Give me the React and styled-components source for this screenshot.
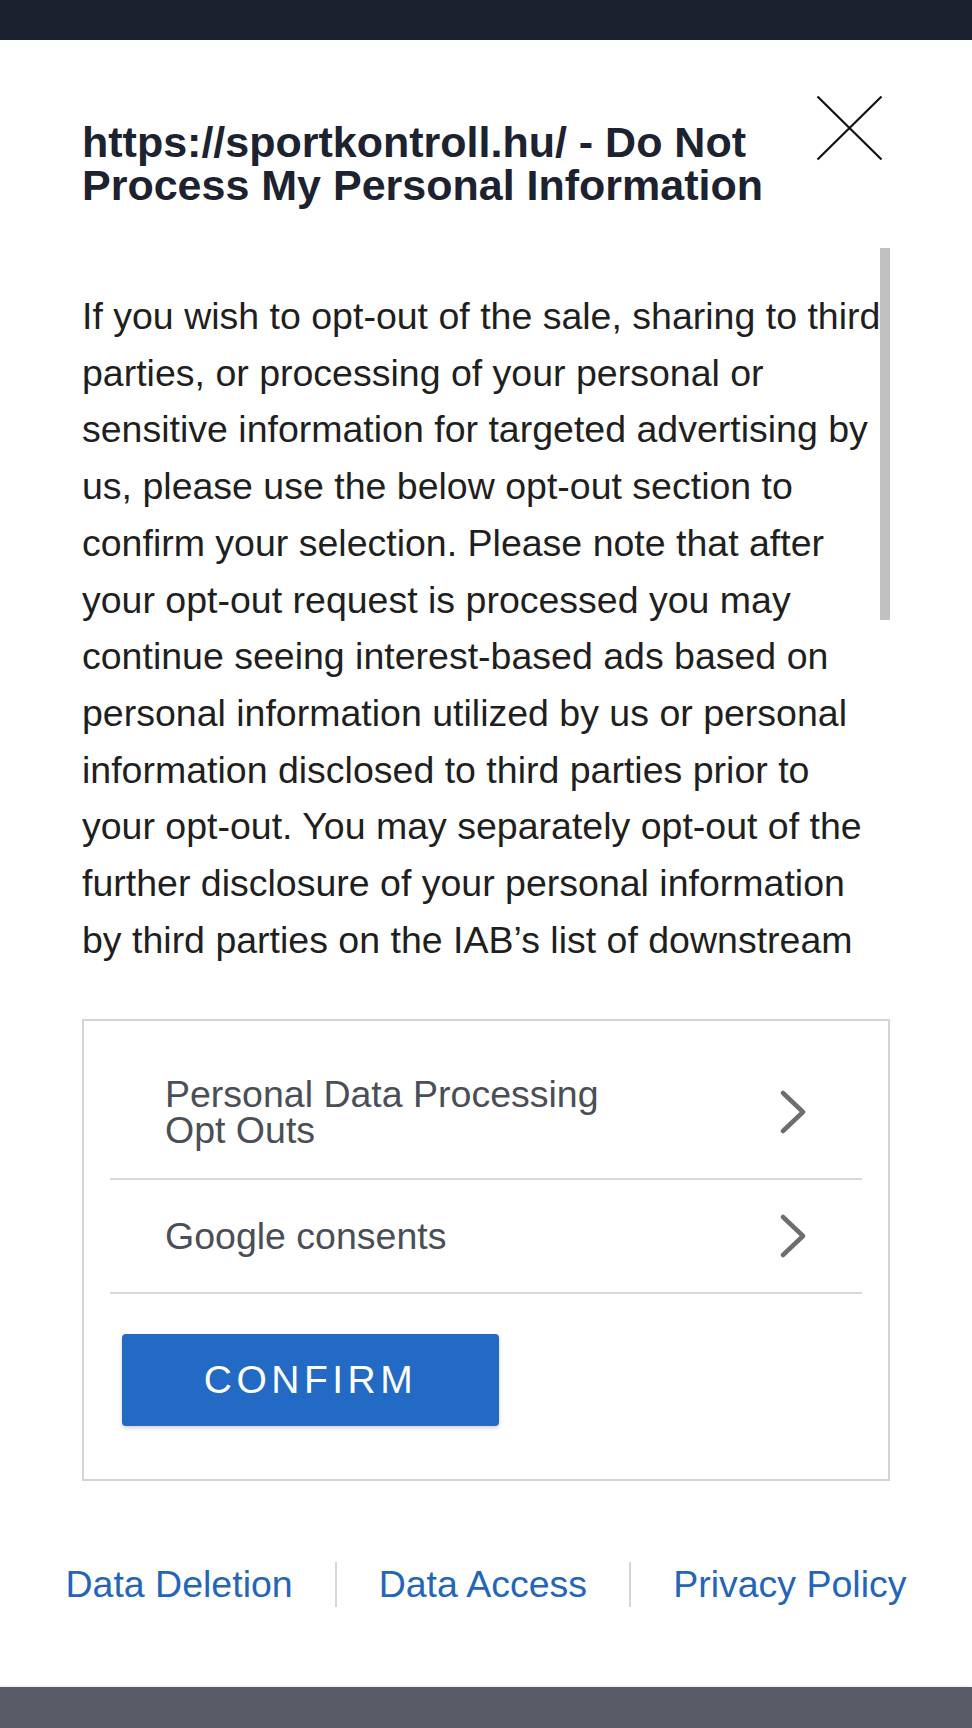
import React from 'react';
import styled, { createGlobalStyle } from 'styled-components';

const COLORS = {
  topBar: '#1c2130',
  bottomBar: '#585c67',
  title: '#1d2230',
  body: '#1f1f1f',
  rowText: '#4a4e56',
  divider: '#d9d9d9',
  chevron: '#6e6e6e',
  primary: '#236ac4',
  link: '#2565b7',
};

const GlobalStyle = createGlobalStyle`
  html, body {
    margin: 0;
    padding: 0;
    background: #fff;
  }
  body {
    font-family: "Liberation Sans", Arial, sans-serif;
  }
`;

const BODY_TEXT =
  'If you wish to opt-out of the sale, sharing to third parties, or processing of your personal or sensitive information for targeted advertising by us, please use the below opt-out section to confirm your selection. Please note that after your opt-out request is processed you may continue seeing interest-based ads based on personal information utilized by us or personal information disclosed to third parties prior to your opt-out. You may separately opt-out of the further disclosure of your personal information by third parties on the IAB\u2019s list of downstream participants. This information may also be disclosed by us to third parties on the IAB\u2019s List of Downstream Participants that may further disclose it to other third parties.';

const options = [
  { id: 'opt-outs', label: 'Personal Data Processing Opt Outs' },
  { id: 'google', label: 'Google consents' },
];

const footerLinks = ['Data Deletion', 'Data Access', 'Privacy Policy'];

const App = () => {
  return (
    <>
      <GlobalStyle />
      <Page>
        <TopBar />
        <Main>
          <Header>
            <Title>https://sportkontroll.hu/ - Do Not Process My Personal Information</Title>
            <CloseButton aria-label='Close'>
              <svg width='67' height='66' viewBox='0 0 67 66'>
                <path d='M1.5 1.5 L65.5 64.5 M65.5 1.5 L1.5 64.5' stroke='#111' strokeWidth='2.2' fill='none' />
              </svg>
            </CloseButton>
          </Header>

          <ScrollWrap>
            <Description>{BODY_TEXT}</Description>
            <Thumb />
          </ScrollWrap>

          <Card>
            {options.map(option => (
              <OptionRow key={option.id}>
                <OptionLabel>{option.label}</OptionLabel>
                <Chevron width='26' height='44' viewBox='0 0 26 44'>
                  <polyline points='3,3 23,22 3,41' />
                </Chevron>
              </OptionRow>
            ))}
            <ConfirmButton>CONFIRM</ConfirmButton>
          </Card>
        </Main>

        <Footer>
          {footerLinks.map((label, i) => (
            <React.Fragment key={label}>
              {i > 0 && <Separator />}
              <FooterLink href='#'>{label}</FooterLink>
            </React.Fragment>
          ))}
        </Footer>
        <BottomBar />
      </Page>
    </>
  );
};

const Page = styled.div`
  display: flex;
  flex-direction: column;
  min-height: 100vh;
`;

const TopBar = styled.div`
  height: 40px;
  background: ${COLORS.topBar};
  flex-shrink: 0;
`;

const BottomBar = styled.div`
  height: 41px;
  background: ${COLORS.bottomBar};
  box-shadow: 0 -1px 2px rgba(0, 0, 0, 0.08);
  flex-shrink: 0;
`;

const Main = styled.main`
  padding: 0 82px;
`;

const Header = styled.header`
  display: flex;
  justify-content: space-between;
  align-items: flex-start;
  padding-top: 55px;
`;

const Title = styled.h1`
  margin: 26px 0 0;
  max-width: 700px;
  font-size: 43px;
  line-height: 43px;
  font-weight: 700;
  color: ${COLORS.title};
`;

const CloseButton = styled.button`
  display: flex;
  padding: 0;
  margin-right: 7px;
  border: 0;
  background: transparent;
  cursor: pointer;
`;

const ScrollWrap = styled.div`
  position: relative;
  margin-top: 41px;
  height: 727px;
  overflow: hidden;
`;

const Description = styled.p`
  margin: 0;
  padding-top: 40px;
  font-size: 37.5px;
  line-height: 56.7px;
  color: ${COLORS.body};
`;

const Thumb = styled.div`
  position: absolute;
  top: 0;
  right: 0;
  width: 10px;
  height: 372px;
  background: #c1c1c1;
`;

const Card = styled.section`
  margin-top: 44px;
  border: 2px solid #d4d4d4;
  padding: 25px 26px 53px 26px;
`;

const OptionRow = styled.div`
  box-sizing: border-box;
  display: flex;
  align-items: center;
  justify-content: space-between;
  min-height: 114px;
  padding: 29.5px 56px 29.5px 55px;
  border-bottom: 2px solid ${COLORS.divider};
  cursor: pointer;
`;

const OptionLabel = styled.span`
  max-width: 470px;
  font-size: 37.5px;
  line-height: 36.5px;
  color: ${COLORS.rowText};
`;

const Chevron = styled.svg`
  flex-shrink: 0;
  fill: none;
  stroke: ${COLORS.chevron};
  stroke-width: 4.5;
  stroke-linecap: round;
  stroke-linejoin: round;
`;

const ConfirmButton = styled.button`
  display: block;
  margin: 40px 0 0 12px;
  width: 377px;
  height: 92px;
  border: 0;
  border-radius: 4px;
  background: ${COLORS.primary};
  box-shadow: 0 2px 4px rgba(0, 0, 0, 0.18);
  color: #fff;
  font-family: "Liberation Sans", Arial, sans-serif;
  font-size: 39px;
  letter-spacing: 4.5px;
  cursor: pointer;
`;

const Footer = styled.nav`
  display: flex;
  justify-content: center;
  gap: 42px;
  padding: 81px 0 80px;
  margin-top: auto;
`;

const Separator = styled.span`
  width: 2px;
  background: #d6d6d6;
`;

const FooterLink = styled.a`
  font-size: 37.5px;
  line-height: 45px;
  color: ${COLORS.link};
  text-decoration: none;
`;

export default App;
